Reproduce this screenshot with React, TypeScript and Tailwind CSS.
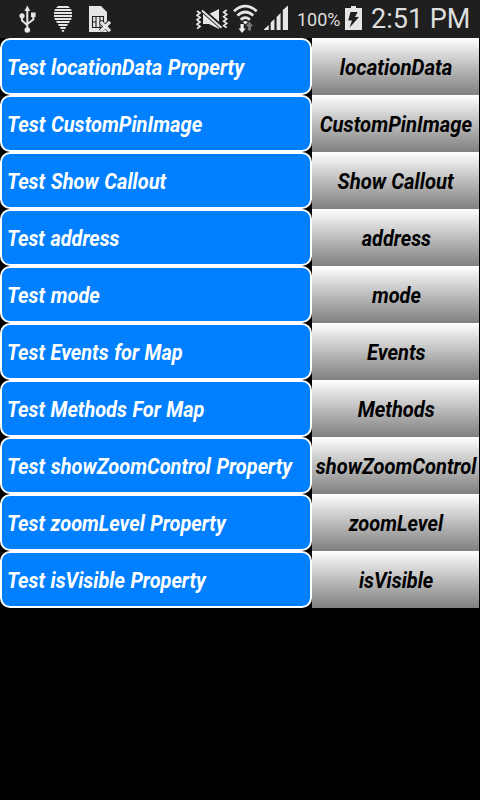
const rows = [
  { title: "Test locationData Property", action: "locationData", titleFit: "scale-x-[0.939]", actionFit: "scale-x-[0.952]" },
  { title: "Test CustomPinImage", action: "CustomPinImage", titleFit: "scale-x-[0.935]", actionFit: "scale-x-[0.941]" },
  { title: "Test Show Callout", action: "Show Callout", titleFit: "scale-x-[0.931]", actionFit: "scale-x-[0.942]" },
  { title: "Test address", action: "address", titleFit: "scale-x-[0.924]", actionFit: "scale-x-[0.926]" },
  { title: "Test mode", action: "mode", titleFit: "scale-x-[0.93]", actionFit: "scale-x-[0.926]" },
  { title: "Test Events for Map", action: "Events", titleFit: "scale-x-[0.927]", actionFit: "scale-x-[0.937]" },
  { title: "Test Methods For Map", action: "Methods", titleFit: "scale-x-[0.926]", actionFit: "scale-x-[0.935]" },
  { title: "Test showZoomControl Property", action: "showZoomControl", titleFit: "scale-x-[0.93]", actionFit: "scale-x-[0.932]" },
  { title: "Test zoomLevel Property", action: "zoomLevel", titleFit: "scale-x-[0.927]", actionFit: "scale-x-[0.928]" },
  { title: "Test isVisible Property", action: "isVisible", titleFit: "scale-x-[0.927]", actionFit: "scale-x-[0.928]" },
];

function UsbIcon() {
  return (
    <svg className="ml-[18px] h-[38px] w-[20px] shrink-0" viewBox="18 0 20 38" fill="#e6e6e6">
      <path d="M27.3 5.5 30.2 11H24.4Z" />
      <path d="M27.3 10V29M22 16V20.5L27.3 25.2M33.3 15V19.5L27.3 24" fill="none" stroke="#e6e6e6" strokeWidth="2" />
      <circle cx="22" cy="15.8" r="2.6" />
      <rect x="31" y="12.5" width="4.6" height="4.6" />
      <circle cx="27.3" cy="30" r="2.8" />
    </svg>
  );
}

function PinIcon() {
  return (
    <svg className="ml-[15px] h-[38px] w-[20px] shrink-0" viewBox="53 0 20 38" fill="#e6e6e6">
      <path d="M58 6H68L70 8H56ZM55 9H71L71.6 11H54.4ZM54 12H72V14H54ZM54 15H72V17H54ZM54.3 18H71.7L71 20H55ZM56 21H70L69 23H57ZM58 24H68L67 26H59ZM60 27H66L65.3 29H60.7ZM61.5 30H64.5L63.5 32H62.5Z" />
    </svg>
  );
}

function SimIcon() {
  return (
    <svg className="ml-[15px] h-[38px] w-[24px] shrink-0" viewBox="88 0 24 38">
      <path d="M89 6H101L107 12V32H89Z" fill="#e6e6e6" />
      <path d="M92.5 16.5H103.5V27.5H92.5ZM96 16.5V27.5M100 16.5V27.5M92.5 22H96M100 21H103.5" fill="none" stroke="#1f1f1f" strokeWidth="1.1" />
      <path d="M100.4 21.5 109.8 31M109.8 21.5 100.4 31" stroke="#1f1f1f" strokeWidth="4.4" />
      <path d="M100.7 21.8 110 31.2M110 21.8 100.7 31.2" stroke="#e6e6e6" strokeWidth="3.2" />
    </svg>
  );
}

function MutedIcon() {
  return (
    <svg className="h-[38px] w-[32px] shrink-0" viewBox="196 0 32 38">
      <path d="M203 14H209L219 9V29L209 24H203Z" fill="#e6e6e6" />
      <path d="M201.5 9.5 222 27.5" stroke="#1f1f1f" strokeWidth="4.6" />
      <path d="M202 10.5 221.5 27.8" stroke="#e6e6e6" strokeWidth="2" />
      <path d="M197 11 200 13 197 15.2 200 17.5 197 19.7 200 22 197 24.2 200 26.4 197 28.6M226.7 10 223.7 12.2 226.7 14.4 223.7 16.7 226.7 19 223.7 21.2 226.7 23.4 223.7 25.6 226.7 27.6" fill="none" stroke="#e6e6e6" strokeWidth="1.7" />
    </svg>
  );
}

function WifiIcon() {
  return (
    <svg className="ml-[4px] h-[38px] w-[28px] shrink-0" viewBox="232 0 28 38">
      <path d="M234 11.2Q245.3 1.2 256.7 11.2M237.4 15.6Q245.3 8.4 253.3 15.6M240.7 19.7Q245.3 15.7 250 19.7" fill="none" stroke="#e6e6e6" strokeWidth="2.7" />
      <path d="M242.7 22Q245.3 19.8 248 22L245.3 24.5Z" fill="#e6e6e6" />
      <path d="M240.5 24H243.7V28.5H245.7L242.1 33 238.5 28.5H240.5Z" fill="#f0f0f0" />
      <path d="M247.8 30.5V26.3H245.6L249.4 21.5 253.2 26.3H251V30.5Z" fill="#777" />
    </svg>
  );
}

function SignalIcon() {
  return (
    <svg className="ml-[3px] h-[38px] w-[26px] shrink-0" viewBox="263 0 26 38" fill="#e6e6e6">
      <path d="M264 30V29.3L268.7 25V30ZM270.7 30V22.6L274.4 19V30ZM276.6 30V17L280.6 13V30ZM282.8 30V10L288 5.5V30Z" />
    </svg>
  );
}

function BatteryIcon() {
  return (
    <svg className="ml-[5px] h-[38px] w-[17px] shrink-0" viewBox="345 0 17 38">
      <path d="M351 6H356V8H362V30H345V8H351Z" fill="#e6e6e6" />
      <path d="M350.5 12H357.7L355 17H359L349.5 27.7 352 20.5H348.2Z" fill="#1f1f1f" />
    </svg>
  );
}

function StatusBar() {
  return (
    <header className="flex h-[38px] items-center bg-[#1f1f1f] text-[#dedede]">
      <UsbIcon />
      <PinIcon />
      <SimIcon />
      <div className="ml-auto flex items-center">
        <MutedIcon />
        <WifiIcon />
        <SignalIcon />
        <span className="ml-[8px] w-[43px] pt-[2px] text-[18px] leading-none whitespace-nowrap">100%</span>
        <BatteryIcon />
        <span className="ml-[9px] w-[109px] text-[27px] leading-none whitespace-nowrap">2:51 PM</span>
      </div>
    </header>
  );
}

export default function App() {
  return (
    <div className="h-[800px] w-[480px] overflow-hidden bg-black font-[Roboto,sans-serif]">
      <StatusBar />
      <main>
        {rows.map(({ title, action, titleFit, actionFit }) => (
          <div key={action} className="flex h-[57px] pr-px text-[21.5px] leading-none font-bold italic whitespace-nowrap">
            <div className="flex w-[312px] shrink-0 items-center rounded-[10px] border-2 border-white bg-[#0080ff] pt-[3px] pl-[4.5px] text-white">
              <span className={`origin-left [word-spacing:0.7px] ${titleFit}`}>{title}</span>
            </div>
            <button className="flex w-[167px] shrink-0 items-center justify-center bg-linear-to-b from-white to-[#808080] pt-[3px] pl-px text-black">
              <span className={actionFit}>{action}</span>
            </button>
          </div>
        ))}
      </main>
    </div>
  );
}
